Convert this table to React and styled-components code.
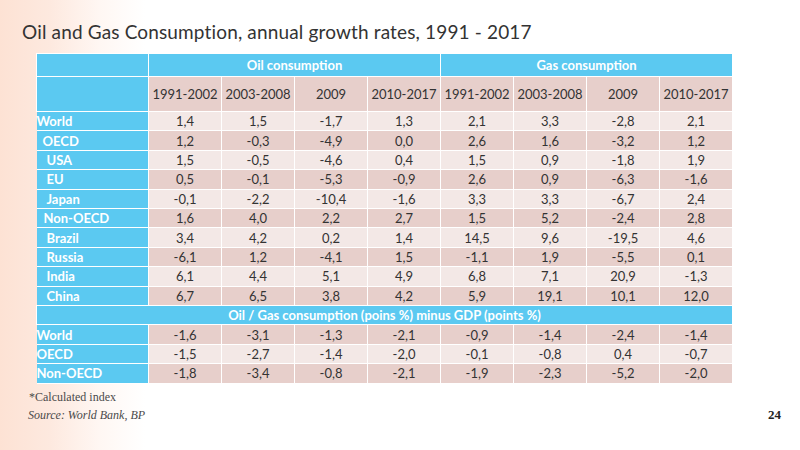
import React from "react";
import styled, { createGlobalStyle } from "styled-components";

const GlobalStyle = createGlobalStyle`
  body {
    margin: 0;
    background: #ffffff;
  }
`;

const Slide = styled.div`
  width: 800px;
  height: 450px;
  box-sizing: border-box;
  background: linear-gradient(90deg, #fde2d4 0px, #fde9df 50px, #fff7f3 100px, #ffffff 145px);
  padding-top: 20px;
  overflow: hidden;
`;

const Title = styled.h1`
  margin: 0 0 0 22px;
  font-family: Lato, "Open Sans", sans-serif;
  font-weight: 400;
  font-size: 19px;
  line-height: 24px;
  color: #333333;
  letter-spacing: 0.15px;
`;

const Table = styled.table`
  margin: 9px 0 0 36px;
  border-collapse: collapse;
  table-layout: fixed;
  width: 697px;
  font-family: Lato, "Open Sans", sans-serif;
  font-size: 13px;
  color: #333333;
`;

const HeadCell = styled.th`
  background: #5bc9f1;
  color: #ffffff;
  font-weight: 700;
  height: ${(p) => p.$h || 19}px;
  padding: 0;
  border: 1.5px solid #ffffff;
  text-align: center;
  font-size: 13px;
`;

const YearCell = styled.td`
  background: #e7cfcb;
  height: 34px;
  padding: 0;
  border: 1.5px solid #ffffff;
  text-align: center;
  color: #333333;
`;

const LabelCell = styled.td`
  background: #5bc9f1;
  color: #ffffff;
  font-weight: 700;
  font-size: 13px;
  height: 18.4px;
  padding: 0 0 0 ${(p) => p.$indent || 0}px;
  border: 1.5px solid #ffffff;
  border-left: none;
  text-align: left;
  white-space: nowrap;
`;

const ValueCell = styled.td`
  background: ${(p) => (p.$dark ? "#e7cfcb" : "#f3e8e6")};
  height: 18.4px;
  padding: 0;
  border: 1.5px solid #ffffff;
  text-align: center;
`;

const Footer = styled.div`
  display: flex;
  justify-content: space-between;
  align-items: flex-start;
  margin: 6px 19px 0 28px;
`;

const Notes = styled.div`
  display: flex;
  flex-direction: column;
  gap: 3px;
`;

const Note = styled.div`
  font-family: "Liberation Serif", "DejaVu Serif", serif;
  font-size: 12px;
  line-height: 15px;
  color: #4a4a4a;
  font-style: ${(p) => (p.$italic ? "italic" : "normal")};
  padding-left: ${(p) => (p.$italic ? 0 : 1)}px;
`;

const PageNum = styled.div`
  font-family: "Liberation Serif", "DejaVu Serif", serif;
  margin-top: 17px;
  font-size: 13px;
  font-weight: 700;
  color: #222222;
`;

const years = ["1991-2002", "2003-2008", "2009", "2010-2017"];

const rows = [
  ["World", 0, ["1,4", "1,5", "-1,7", "1,3", "2,1", "3,3", "-2,8", "2,1"]],
  ["OECD", 6, ["1,2", "-0,3", "-4,9", "0,0", "2,6", "1,6", "-3,2", "1,2"]],
  ["USA", 10, ["1,5", "-0,5", "-4,6", "0,4", "1,5", "0,9", "-1,8", "1,9"]],
  ["EU", 10, ["0,5", "-0,1", "-5,3", "-0,9", "2,6", "0,9", "-6,3", "-1,6"]],
  ["Japan", 10, ["-0,1", "-2,2", "-10,4", "-1,6", "3,3", "3,3", "-6,7", "2,4"]],
  ["Non-OECD", 7, ["1,6", "4,0", "2,2", "2,7", "1,5", "5,2", "-2,4", "2,8"]],
  ["Brazil", 10, ["3,4", "4,2", "0,2", "1,4", "14,5", "9,6", "-19,5", "4,6"]],
  ["Russia", 10, ["-6,1", "1,2", "-4,1", "1,5", "-1,1", "1,9", "-5,5", "0,1"]],
  ["India", 10, ["6,1", "4,4", "5,1", "4,9", "6,8", "7,1", "20,9", "-1,3"]],
  ["China", 10, ["6,7", "6,5", "3,8", "4,2", "5,9", "19,1", "10,1", "12,0"]],
];

const gdpRows = [
  ["World", ["-1,6", "-3,1", "-1,3", "-2,1", "-0,9", "-1,4", "-2,4", "-1,4"]],
  ["OECD", ["-1,5", "-2,7", "-1,4", "-2,0", "-0,1", "-0,8", "0,4", "-0,7"]],
  ["Non-OECD", ["-1,8", "-3,4", "-0,8", "-2,1", "-1,9", "-2,3", "-5,2", "-2,0"]],
];

export default function App() {
  return (
    <>
      <GlobalStyle />
      <Slide>
        <Title>Oil and Gas Consumption, annual growth rates, 1991 - 2017</Title>
        <Table>
          <colgroup>
            <col style={{ width: 112 }} />
            {Array.from({ length: 8 }).map((_, i) => (
              <col key={i} style={{ width: 73 }} />
            ))}
          </colgroup>
          <thead>
            <tr>
              <HeadCell $h={22} />
              <HeadCell $h={22} colSpan={4}>Oil consumption</HeadCell>
              <HeadCell $h={22} colSpan={4}>Gas consumption</HeadCell>
            </tr>
            <tr>
              <HeadCell $h={34} />
              {[...years, ...years].map((y, i) => (
                <YearCell key={i}>{y}</YearCell>
              ))}
            </tr>
          </thead>
          <tbody>
            {rows.map(([name, indent, vals], r) => (
              <tr key={name + r}>
                <LabelCell $indent={indent}>{name}</LabelCell>
                {vals.map((v, i) => (
                  <ValueCell key={i} $dark={r % 2 === 1}>{v}</ValueCell>
                ))}
              </tr>
            ))}
            <tr>
              <HeadCell $h={18.5} colSpan={9}>
                Oil / Gas consumption (poins %) minus GDP (points %)
              </HeadCell>
            </tr>
            {gdpRows.map(([name, vals], r) => (
              <tr key={"g" + name}>
                <LabelCell>{name}</LabelCell>
                {vals.map((v, i) => (
                  <ValueCell key={i} $dark={r % 2 === 0}>{v}</ValueCell>
                ))}
              </tr>
            ))}
          </tbody>
        </Table>
        <Footer>
          <Notes>
            <Note>*Calculated index</Note>
            <Note $italic>Source: World Bank, BP</Note>
          </Notes>
          <PageNum>24</PageNum>
        </Footer>
      </Slide>
    </>
  );
}
